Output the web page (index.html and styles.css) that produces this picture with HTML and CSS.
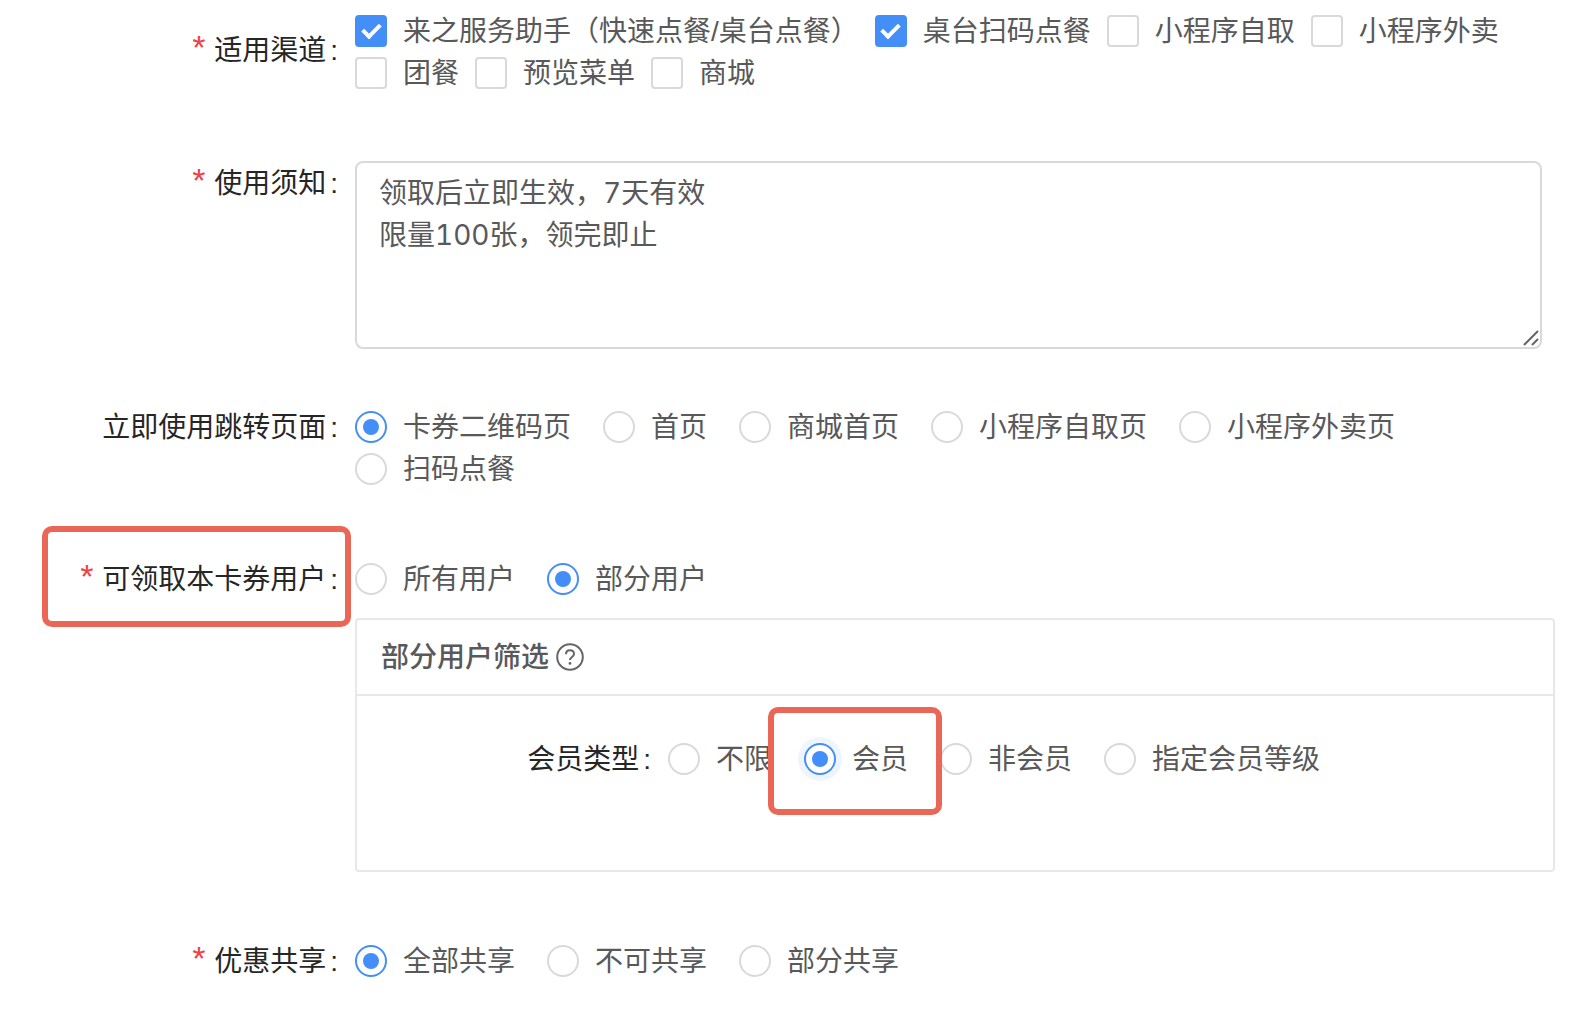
FILE: index.html
```html
<!DOCTYPE html>
<html lang="zh-CN">
<head>
<meta charset="utf-8">
<meta name="viewport" content="width=device-width, initial-scale=1">
<title>卡券设置</title>
<link rel="stylesheet" href="styles.css">
</head>
<body>
<form class="form">
  <div class="row" role="group" aria-labelledby="channel-label">
    <div class="label required" id="channel-label">适用渠道<span class="colon">:</span></div>
    <div class="options options-check">
      <label class="option"><input class="check" type="checkbox" checked>来之服务助手（快速点餐/桌台点餐）</label>
      <label class="option"><input class="check" type="checkbox" checked>桌台扫码点餐</label>
      <label class="option"><input class="check" type="checkbox">小程序自取</label>
      <label class="option"><input class="check" type="checkbox">小程序外卖</label>
      <label class="option"><input class="check" type="checkbox">团餐</label>
      <label class="option"><input class="check" type="checkbox">预览菜单</label>
      <label class="option"><input class="check" type="checkbox">商城</label>
    </div>
  </div>

  <div class="row row-notice">
    <label class="label required" for="notice">使用须知<span class="colon">:</span></label>
    <div class="notice-field">
      <textarea class="notice" id="notice">领取后立即生效，7天有效
限量100张，领完即止</textarea>
      <svg class="grip" viewBox="0 0 16 16" aria-hidden="true"><path d="M1 15 15 1M9 15l6-6"/></svg>
    </div>
  </div>

  <div class="row" role="radiogroup" aria-labelledby="target-label">
    <div class="label" id="target-label">立即使用跳转页面<span class="colon">:</span></div>
    <div class="options options-radio">
      <label class="option"><input class="radio" type="radio" name="target" checked>卡券二维码页</label>
      <label class="option"><input class="radio" type="radio" name="target">首页</label>
      <label class="option"><input class="radio" type="radio" name="target">商城首页</label>
      <label class="option"><input class="radio" type="radio" name="target">小程序自取页</label>
      <label class="option"><input class="radio" type="radio" name="target">小程序外卖页</label>
      <label class="option"><input class="radio" type="radio" name="target">扫码点餐</label>
    </div>
  </div>

  <div class="row" role="radiogroup" aria-labelledby="users-label">
    <div class="label required" id="users-label">可领取本卡券用户<span class="colon">:</span><span class="mark mark-label"></span></div>
    <div>
      <div class="options options-radio">
        <label class="option"><input class="radio" type="radio" name="users">所有用户</label>
        <label class="option"><input class="radio" type="radio" name="users" checked>部分用户</label>
      </div>
      <section class="panel">
        <h2 class="panel-title">部分用户筛选
          <svg class="help" viewBox="0 0 28 28" aria-hidden="true"><circle cx="14" cy="14" r="12.8"/><path d="M10 11.2c0-2.4 1.7-4 4-4s4 1.5 4 3.8c0 2.9-4 3.1-4 6"/><circle class="help-dot" cx="14" cy="20.4" r="1.4"/></svg>
        </h2>
        <div class="panel-body" role="radiogroup" aria-labelledby="member-label">
          <div class="label" id="member-label">会员类型<span class="colon">:</span></div>
          <div class="options options-radio">
            <label class="option"><input class="radio" type="radio" name="member">不限</label>
            <label class="option"><input class="radio radio-active" type="radio" name="member" checked>会员<span class="mark mark-option"></span></label>
            <label class="option"><input class="radio" type="radio" name="member">非会员</label>
            <label class="option"><input class="radio" type="radio" name="member">指定会员等级</label>
          </div>
        </div>
      </section>
    </div>
  </div>

  <div class="row" role="radiogroup" aria-labelledby="share-label">
    <div class="label required" id="share-label">优惠共享<span class="colon">:</span></div>
    <div class="options options-radio">
      <label class="option"><input class="radio" type="radio" name="share" checked>全部共享</label>
      <label class="option"><input class="radio" type="radio" name="share">不可共享</label>
      <label class="option"><input class="radio" type="radio" name="share">部分共享</label>
    </div>
  </div>
</form>
</body>
</html>
```
FILE: styles.css
```css
*,
*::before {
  box-sizing: border-box;
}

body {
  margin: 0;
  background: #fff;
  color: #595959;
  font: 28px/42px "Liberation Sans", "Noto Sans CJK SC", sans-serif;
}

.form {
  padding: 11px 23px 0 0;
}

.row {
  display: grid;
  grid-template-columns: 355px minmax(0, 1fr);
  align-items: start;
  margin-bottom: 49px;
}

.row-notice {
  margin-bottom: 39px;
}

.label {
  position: relative;
  padding-right: 17px;
  color: #262626;
  line-height: 80px;
  text-align: right;
  white-space: nowrap;
}

.required::before {
  content: "*";
  margin-right: 5px;
  color: #f04143;
  font-family: "Liberation Mono", monospace;
  font-size: 34px;
  line-height: 1;
}

.colon {
  margin-left: 4px;
}

.options {
  display: flex;
  flex-wrap: wrap;
}

.options-check {
  column-gap: 16px;
}

.options-radio {
  column-gap: 32px;
  padding-top: 19px;
}

.option {
  position: relative;
  display: flex;
  align-items: center;
  gap: 16px;
  white-space: nowrap;
}

.check,
.radio {
  appearance: none;
  display: grid;
  place-items: center;
  flex: none;
  width: 32px;
  height: 32px;
  margin: 0 0 2px;
  border: 2px solid #d9d9d9;
  background: #fff;
}

.check {
  border-radius: 4px;
}

.check:checked {
  border-color: #448ef7;
  background: #448ef7;
}

.check:checked::before {
  content: "";
  width: 11px;
  height: 18px;
  margin-bottom: 4px;
  border: solid #fff;
  border-width: 0 4px 4px 0;
  transform: rotate(45deg);
}

.radio {
  border-radius: 50%;
}

.radio:checked {
  border-color: #448ef7;
}

.radio:checked::before {
  content: "";
  width: 16px;
  height: 16px;
  border-radius: 50%;
  background: #448ef7;
}

.radio-active {
  box-shadow: 0 0 0 6px #eef5ff;
}

.notice-field {
  position: relative;
  margin: 17px 13px 0 0;
}

.notice {
  display: block;
  width: 100%;
  height: 188px;
  padding: 9px 22px;
  border: 2px solid #d9d9d9;
  border-radius: 8px;
  background: #fff;
  color: inherit;
  font: 28px/42px Inter, "Noto Sans CJK SC", sans-serif;
  font-variant-numeric: tabular-nums;
  resize: none;
}

.grip {
  position: absolute;
  right: 3px;
  bottom: 3px;
  width: 16px;
  height: 16px;
  fill: none;
  stroke: #666;
  stroke-width: 2;
}

.panel {
  margin: 17px 0 1px;
  border: 2px solid #e8e8e8;
  border-radius: 4px;
}

.panel-title {
  display: flex;
  align-items: center;
  gap: 7px;
  margin: 0;
  padding: 17px 24px 15px;
  border-bottom: 2px solid #e8e8e8;
  font-size: 28px;
  font-weight: 500;
}

.help {
  width: 28px;
  height: 28px;
  margin-bottom: 2px;
  fill: none;
  stroke: #666;
  stroke-width: 2;
}

.help-dot {
  fill: #666;
  stroke: none;
}

.panel-body {
  display: grid;
  grid-template-columns: 311px minmax(0, 1fr);
  align-items: start;
  padding: 24px 0 70px;
}

/* Red call-out frames drawn over the form */
.mark {
  position: absolute;
  z-index: 1;
  border: 6px solid #ea6757;
  border-radius: 10px;
  pointer-events: none;
}

.mark-label {
  inset: -14px 4px -7px 42px;
}

.mark-option {
  inset: -32px -34px -34px -36px;
}
```
